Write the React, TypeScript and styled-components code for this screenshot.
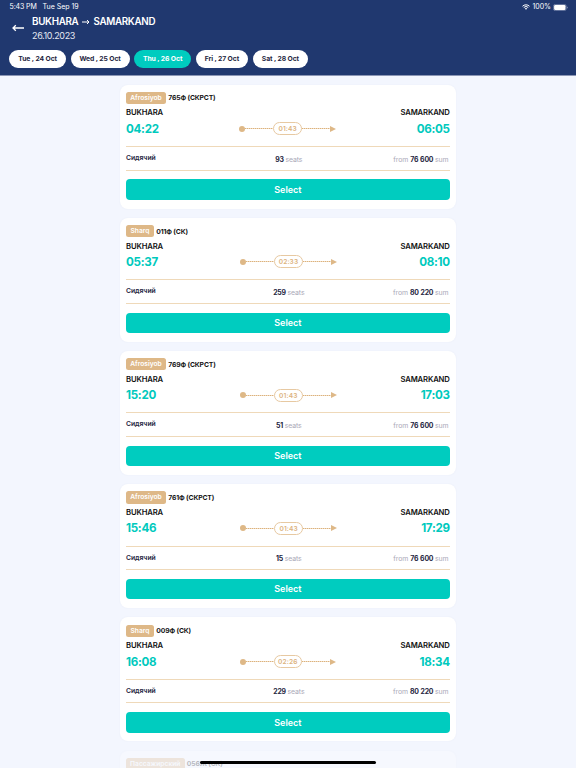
import React from "react";
import styled, { createGlobalStyle } from "styled-components";

const GlobalStyle = createGlobalStyle`
  * { box-sizing: border-box; }
  html, body { margin: 0; padding: 0; }
  body {
    font-family: Inter, "Noto Sans", sans-serif;
    background: #f3f6fe;
    overflow: hidden;
  }
  button { font: inherit; border: 0; padding: 0; }
`;

const Screen = styled.div`
  position: relative;
  width: 576px;
  height: 768px;
  overflow: hidden;
  background: #f3f6fe;
`;

const Header = styled.header`
  height: 76px;
  background: #20386f;
  border-bottom: 1px solid #8b96b5;
  color: #fff;
`;

const StatusBar = styled.div`
  height: 14px;
  padding: 0 8px 0 9.5px;
  display: flex;
  align-items: center;
  font-size: 7px;
  line-height: 14px;
`;

const Clock = styled.span`
  width: 33px;
  white-space: nowrap;
  letter-spacing: -0.1px;
`;

const StatusIcons = styled.div`
  margin-left: auto;
  display: flex;
  align-items: center;
  gap: 2px;
`;

const TitleBar = styled.div`
  height: 35px;
  padding-left: 12px;
  display: flex;
`;

const BackButton = styled.button`
  width: 20px;
  height: 28px;
  background: none;
  color: #fff;
  display: flex;
  align-items: center;
`;

const RouteTitle = styled.h1`
  margin: 0;
  height: 15px;
  display: flex;
  align-items: center;
  font-size: 9.8px;
  line-height: 15px;
  font-weight: 600;
  letter-spacing: -0.3px;
`;

const TitleArrow = styled.svg`
  margin: 0 3px 0 4px;
`;

const TravelDate = styled.div`
  font-size: 9px;
  line-height: 13px;
  letter-spacing: -0.35px;
  color: #e5e9f2;
`;

const DateTabs = styled.nav`
  padding-left: 9.3px;
  display: flex;
  gap: 4.6px;
`;

const DateTab = styled.button<{ $width: number; $active?: boolean }>`
  width: ${(p) => p.$width}px;
  height: 18.4px;
  margin-top: 0.6px;
  border-radius: 10px;
  background: ${(p) => (p.$active ? "#00ccbf" : "#fff")};
  color: ${(p) => (p.$active ? "#fff" : "#252641")};
  font-size: 6.8px;
  font-weight: 700;
  letter-spacing: -0.08px;
  text-align: center;
  white-space: nowrap;
`;

const TrainList = styled.main`
  width: 336px;
  margin: 8.7px auto 0;
  display: flex;
  flex-direction: column;
  gap: 9.2px;
`;

const Card = styled.article<{ $fading?: boolean }>`
  flex: none;
  height: 124px;
  padding: 7px 6.3px 0 6px;
  border-radius: 8px;
  background: #fff;
  box-shadow: 0 0 2px rgba(60, 80, 140, 0.06);
  opacity: ${(p) => (p.$fading ? 0.28 : 1)};
`;

const TrainName = styled.div`
  display: flex;
  align-items: center;
  gap: 2.3px;
  height: 12.5px;
  font-size: 6.8px;
  font-weight: 700;
  color: #151515;
  white-space: nowrap;
`;

const TypeBadge = styled.span<{ $width: number }>`
  width: ${(p) => p.$width}px;
  height: 12.3px;
  border-radius: 2.5px;
  background: #deb887;
  color: #fff;
  font-size: 6.7px;
  line-height: 13px;
  font-weight: 600;
  letter-spacing: 0;
  text-align: center;
`;

const TrainNumber = styled.span`
  letter-spacing: -0.14px;
`;

const Stations = styled.div`
  display: flex;
  justify-content: space-between;
  margin-top: 3.3px;
  font-size: 7.7px;
  line-height: 12.4px;
  height: 12px;
  font-weight: 600;
  letter-spacing: -0.15px;
  color: #111;
`;

const Times = styled.div`
  display: flex;
  align-items: center;
  justify-content: space-between;
  height: 18.6px;
  margin-bottom: 8px;
`;

const Time = styled.span`
  font-size: 11.6px;
  line-height: 18px;
  font-weight: 700;
  letter-spacing: -0.3px;
  color: #00c9bd;
`;

const Journey = styled.div`
  display: flex;
  align-items: center;
`;

const StartDot = styled.i`
  width: 6px;
  height: 6px;
  border-radius: 50%;
  background: #deb887;
`;

const DottedTrack = styled.i`
  width: 28px;
  height: 1px;
  background: repeating-linear-gradient(90deg, #dcb27d 0 1.3px, #f0dcc2 1.3px 2px);
`;

const EndArrow = styled.i`
  width: 0;
  height: 0;
  border: 3.2px solid transparent;
  border-left: 6px solid #deb887;
  border-right: 0;
`;

const Duration = styled.span`
  width: 28.5px;
  height: 13px;
  border: 1px solid #e7c9a2;
  border-radius: 7px;
  color: #dcb27d;
  font-size: 6.6px;
  line-height: 12px;
  font-weight: 600;
  letter-spacing: 0.12px;
  text-align: center;
`;

const SeatRow = styled.div`
  height: 24.6px;
  border-top: 1px solid #efd9b9;
  border-bottom: 1px solid #efd9b9;
  display: grid;
  grid-template-columns: 1fr auto 1fr;
  line-height: 22.6px;
  font-size: 6.9px;
  white-space: nowrap;
`;

const SeatClass = styled.span`
  height: 22px;
  line-height: 22.4px;
  font-size: 6.8px;
  font-weight: 600;
  letter-spacing: -0.03px;
  color: #252641;
`;

const Muted = styled.span<{ $end?: boolean }>`
  padding-top: 1.6px;
  height: 22.6px;
  padding-right: ${(p) => (p.$end ? 1.3 : 0)}px;
  text-align: ${(p) => (p.$end ? "right" : "center")};
  color: #aaa9b8;
  letter-spacing: -0.08px;
`;

const Value = styled.b`
  margin: 0 1.6px 0 2px;
  font-weight: 700;
  letter-spacing: -0.2px;
  word-spacing: 0.5px;
  color: #252641;
`;

const SelectButton = styled.button`
  display: block;
  width: 100%;
  height: 20.4px;
  margin-top: 8.8px;
  padding-bottom: 0.6px;
  border-radius: 4px;
  background: #00ccbf;
  color: #fff;
  font-size: 9px;
  font-weight: 600;
  letter-spacing: 0;
`;

const HomeIndicator = styled.div`
  position: absolute;
  left: 200px;
  bottom: 4.5px;
  width: 176px;
  height: 3px;
  border-radius: 2px;
  background: #000;
`;

type Trip = {
  departs: string;
  arrives: string;
  duration: string;
  seats: string;
  price: string;
};

type Train = {
  type: string;
  badge: number;
  number: string;
  trip?: Trip;
};

const trains: Train[] = [
  { type: "Afrosiyob", badge: 40, number: "765Ф (СКРСТ)", trip: { departs: "04:22", arrives: "06:05", duration: "01:43", seats: "93", price: "76 600" } },
  { type: "Sharq", badge: 28, number: "011Ф (СК)", trip: { departs: "05:37", arrives: "08:10", duration: "02:33", seats: "259", price: "80 220" } },
  { type: "Afrosiyob", badge: 40, number: "769Ф (СКРСТ)", trip: { departs: "15:20", arrives: "17:03", duration: "01:43", seats: "51", price: "76 600" } },
  { type: "Afrosiyob", badge: 40, number: "761Ф (СКРСТ)", trip: { departs: "15:46", arrives: "17:29", duration: "01:43", seats: "15", price: "76 600" } },
  { type: "Sharq", badge: 28, number: "009Ф (СК)", trip: { departs: "16:08", arrives: "18:34", duration: "02:26", seats: "229", price: "80 220" } },
  { type: "Пассажирский", badge: 58.5, number: "056Ж (СК)" },
];

const dates = [
  { label: "Tue , 24 Oct", width: 56.7 },
  { label: "Wed , 25 Oct", width: 59 },
  { label: "Thu , 26 Oct", width: 57, active: true },
  { label: "Fri , 27 Oct", width: 52.2 },
  { label: "Sat , 28 Oct", width: 55.7 },
];

const WifiIcon = () => (
  <svg width="8" height="6" viewBox="0 0 16 12" fill="none" stroke="#fff" strokeWidth="2">
    <path d="M1 4.5a10 10 0 0 1 14 0M3.5 7a6.5 6.5 0 0 1 9 0" />
    <path d="M8 11.5 5.5 9a3.6 3.6 0 0 1 5 0Z" fill="#fff" stroke="none" />
  </svg>
);

const BatteryIcon = () => (
  <svg width="15" height="7" viewBox="0 0 15 7">
    <rect x="0.4" y="0.4" width="12.8" height="6.2" rx="1.9" fill="none" stroke="#8997b7" strokeWidth="0.7" />
    <rect x="1.1" y="1.1" width="11.4" height="4.8" rx="1.2" fill="#fff" />
    <path d="M14 2.4q.8.2.8 1.1t-.8 1.1Z" fill="#8997b7" />
  </svg>
);

const TripDetails = ({ trip }: { trip: Trip }) => (
  <>
    <Stations>
      <span>BUKHARA</span>
      <span>SAMARKAND</span>
    </Stations>
    <Times>
      <Time>{trip.departs}</Time>
      <Journey>
        <StartDot />
        <DottedTrack />
        <Duration>{trip.duration}</Duration>
        <DottedTrack />
        <EndArrow />
      </Journey>
      <Time>{trip.arrives}</Time>
    </Times>
    <SeatRow>
      <SeatClass>Сидячий</SeatClass>
      <Muted>
        <Value>{trip.seats}</Value>seats
      </Muted>
      <Muted $end>
        from<Value>{trip.price}</Value>sum
      </Muted>
    </SeatRow>
    <SelectButton>Select</SelectButton>
  </>
);

const TrainCard = ({ train }: { train: Train }) => (
  <Card $fading={!train.trip}>
    <TrainName>
      <TypeBadge $width={train.badge}>{train.type}</TypeBadge>
      <TrainNumber>{train.number}</TrainNumber>
    </TrainName>
    {train.trip && <TripDetails trip={train.trip} />}
  </Card>
);

export default function App() {
  return (
    <Screen>
      <GlobalStyle />
      <Header>
        <StatusBar>
          <Clock>5:43 PM</Clock>
          <span>Tue Sep 19</span>
          <StatusIcons>
            <WifiIcon />
            <span>100%</span>
            <BatteryIcon />
          </StatusIcons>
        </StatusBar>
        <TitleBar>
          <BackButton aria-label="Back">
            <svg width="13" height="10" viewBox="0 0 13 10" fill="none" stroke="currentColor" strokeWidth="1.3">
              <path d="M12 5H1M3.8 2.2 1 5l2.8 2.8" />
            </svg>
          </BackButton>
          <div>
            <RouteTitle>
              BUKHARA
              <TitleArrow width="8" height="8" viewBox="0 0 8 8" fill="none" stroke="currentColor">
                <path d="M0 4h7M5 2l2 2-2 2" />
              </TitleArrow>
              SAMARKAND
            </RouteTitle>
            <TravelDate>26.10.2023</TravelDate>
          </div>
        </TitleBar>
        <DateTabs>
          {dates.map((d) => (
            <DateTab key={d.label} $width={d.width} $active={d.active}>
              {d.label}
            </DateTab>
          ))}
        </DateTabs>
      </Header>
      <TrainList>
        {trains.map((t) => (
          <TrainCard key={t.number} train={t} />
        ))}
      </TrainList>
      <HomeIndicator />
    </Screen>
  );
}
